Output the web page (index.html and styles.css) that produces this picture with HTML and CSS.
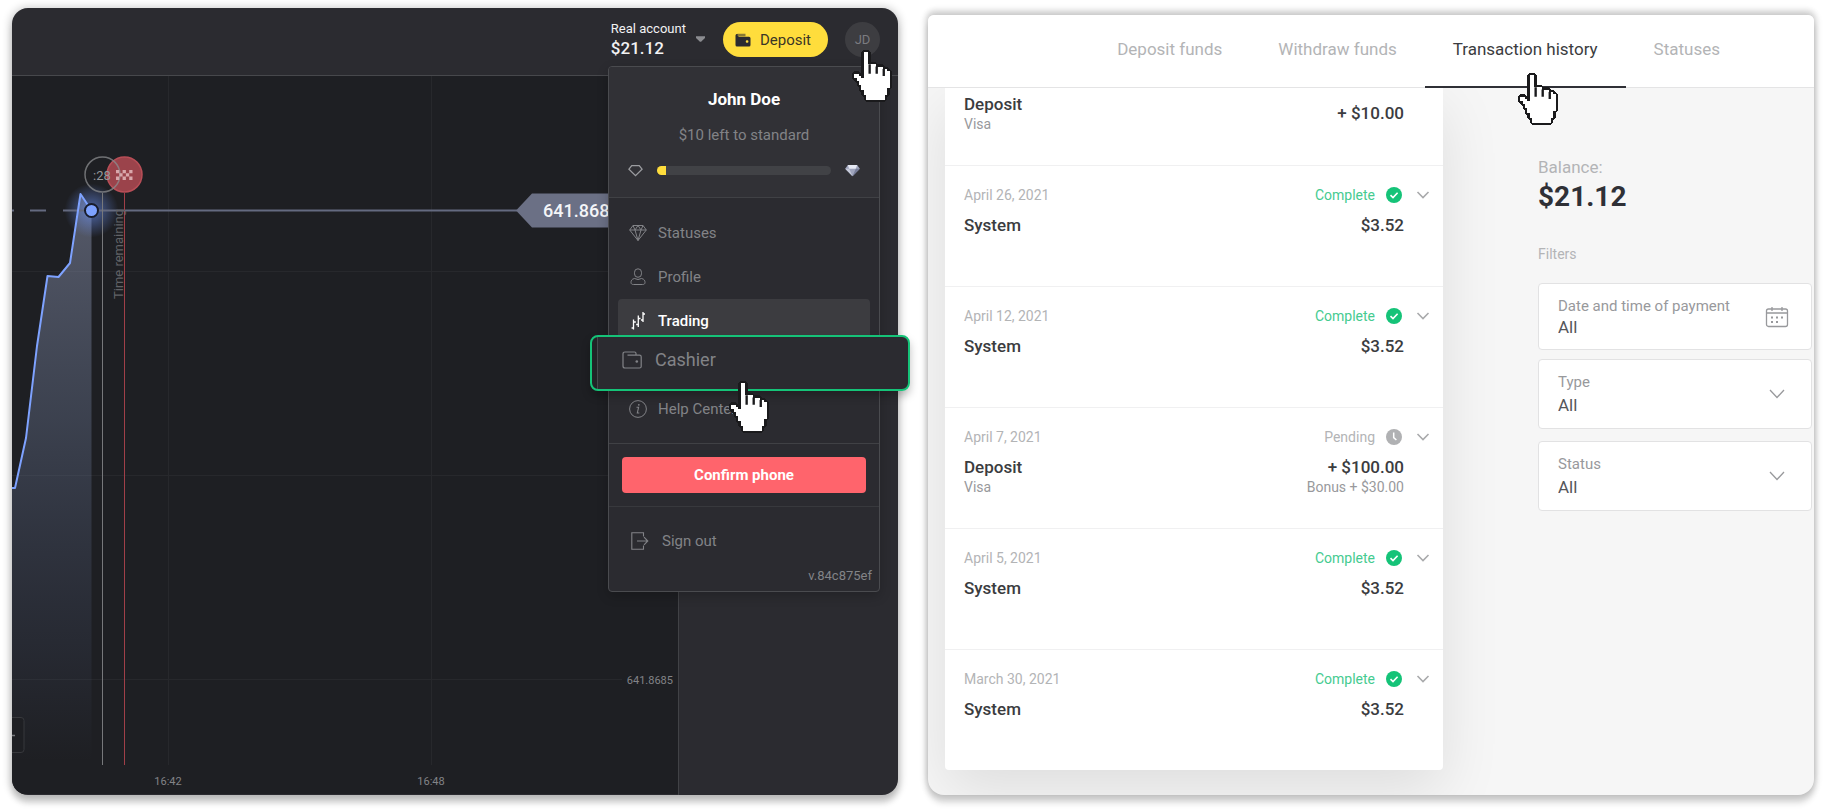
FILE: index.html
```
<!DOCTYPE html>
<html lang="en">
<head>
<meta charset="utf-8">
<title>Cashier</title>
<link rel="stylesheet" href="styles.css">
</head>
<body>
<svg class="sprite" aria-hidden="true">
  <symbol id="hand" viewBox="0 0 17 22">
    <path d="M5 1H7V6H10V7H13V8H15V9H16V16H15V19H14V21H6V19H5V17H4V15H3V13H2V12H1V10H3V11H4V12H5Z" fill="#fff" stroke="#1a1a1c" stroke-width="2" stroke-linejoin="bevel" paint-order="stroke" shape-rendering="crispEdges"/>
    <path d="M7 6h1v4H7zM10 7h1v3h-1zM13 8h1v3h-1z" fill="#1a1a1c"/>
  </symbol>
  <symbol id="check" viewBox="0 0 16 16">
    <circle cx="8" cy="8" r="8" fill="#15c378"/>
    <path d="M4.5 8.2 7 10.6 11.6 5.8" fill="none" stroke="#fff" stroke-width="1.6"/>
  </symbol>
  <symbol id="clock" viewBox="0 0 16 16">
    <circle cx="8" cy="8" r="8" fill="#b0b1b3"/>
    <path d="M7.7 3.5V8.6L10.4 11" fill="none" stroke="#fff" stroke-width="1.5"/>
  </symbol>
  <symbol id="chevron" viewBox="0 0 14 8">
    <path d="M1.500 1 7 6.500 12.500 1" fill="none" stroke="#a9aaac" stroke-width="1.600"/>
  </symbol>
</svg>

<section class="panel trading">
  <header class="topbar">
    <button class="account" type="button">
      <span class="account-text"><span class="account-name">Real account</span><span class="account-sum">$21.12</span></span>
      <svg class="caret" viewBox="0 0 8 5"><path d="M0 0H8V1.500L4.500 5H3.500L0 1.500Z" fill="#8b8c90"/></svg>
    </button>
    <button class="deposit" type="button">
      <svg class="wallet" viewBox="0 0 16 14">
        <path d="M1 2.500Q1 .8 2.600 .8H10.500V3.300H1Z" fill="#8a7a34"/>
        <path d="M.5 2.500Q.5 1 2 1H3Q1.800 1.500 2.600 2.700L4 3.800H14Q15.500 3.800 15.500 5.300V12Q15.500 13.500 14 13.500H2Q.5 13.500 .5 12Z" fill="#2b2b30"/>
        <rect x="10.800" y="7.200" width="2.600" height="2.600" rx="1" fill="#ffdd3c"/>
      </svg>
      Deposit
    </button>
    <div class="profile">
      <button class="avatar" type="button">JD</button>
      <svg class="hand hand-avatar"><use href="#hand"/></svg>
    </div>

    <div class="menu">
      <div class="menu-head">
        <h2 class="user">John Doe</h2>
        <p class="left">$10 left to standard</p>
        <div class="level">
          <svg class="gem" viewBox="0 0 16 13"><path d="M4 1.200H12L15 5 8 12 1 5Z" fill="none" stroke="#9b9ca0" stroke-width="1.400"/></svg>
          <div class="track"><div class="fill"></div></div>
          <svg class="gem" viewBox="0 0 16 13"><path d="M3 .5H13L15.800 4.500 8 12.500 .2 4.500Z" fill="#9fa5bd"/><path d="M3 .5H13L11.500 4.500H4.500Z" fill="#e6e9f4"/><path d="M.2 4.500H4.500L8 12.500Z" fill="#c6cada"/><path d="M11.500 4.500H15.800L8 12.500Z" fill="#767c98"/></svg>
        </div>
      </div>
      <nav class="menu-list">
        <a class="item" href="#">
          <svg class="icon" viewBox="0 0 18 18"><path d="M4 1.500H14L17.300 6 9 16.500 .7 6ZM.7 6H17.300M4 1.500 6 6 9 16.500 12 6 14 1.500M6 6 9 1.500 12 6" fill="none" stroke="currentColor" stroke-width="1"/></svg>Statuses</a>
        <a class="item" href="#">
          <svg class="icon" viewBox="0 0 18 18"><rect x="5.500" y=".8" width="7" height="8.500" rx="3.500" fill="none" stroke="currentColor"/><path d="M5.500 10.500C2.500 11 2 13 2 14.500 2 16 3 16.500 4.500 16.500H13.500C15 16.500 16 16 16 14.500 16 13 15.500 11 12.500 10.500Q9 12.500 5.500 10.500Z" fill="none" stroke="currentColor"/></svg>Profile</a>
        <a class="item active" href="#">
          <svg class="icon" viewBox="0 0 18 18"><path d="M4.500 7.500V17.500M9.300 3.500V15M14 0V10M4.500 10H6.800M2.600 16H4.500M9.300 6.500H11.500M7.200 12.500H9.300M14 2H16M12 8H14" fill="none" stroke="currentColor" stroke-width="1.300"/></svg>Trading</a>
        <div class="item-slot">
          <a class="callout" href="#">
            <svg class="icon-lg" viewBox="0 0 20 18"><path d="M14 4V2.500Q14 1 12.500 1H3Q1 1 1 3V15Q1 17 3 17H17.500Q19.200 17 19.200 15.500V5.800Q19.200 4.200 17.500 4.200H5.500" fill="none" stroke="currentColor" stroke-width="1.200"/><circle cx="14.800" cy="10.500" r="1.300" fill="currentColor"/></svg>Cashier
          </a>
          <svg class="hand hand-cashier"><use href="#hand"/></svg>
        </div>
        <a class="item" href="#">
          <svg class="icon" viewBox="0 0 18 18"><circle cx="9" cy="9" r="8.400" fill="none" stroke="currentColor"/><path d="M7.500 7.300H9.600L8.300 13H10.300" fill="none" stroke="currentColor" stroke-width="1.100"/><circle cx="9.800" cy="4.800" r=".9" fill="currentColor"/></svg>Help Center</a>
      </nav>
      <div class="menu-confirm"><button class="confirm" type="button">Confirm phone</button></div>
      <div class="menu-foot">
        <a class="signout" href="#">
          <svg class="icon" viewBox="0 0 18 18"><path d="M12.500 4.500V.8H.8V17.200H12.500V13.500M6 9H16.800M13 5.200 16.800 9 13 12.800" fill="none" stroke="currentColor" stroke-width="1.100"/></svg>Sign out</a>
        <p class="version">v.84c875ef</p>
      </div>
    </div>
  </header>

  <div class="workspace">
    <svg class="chart" viewBox="0 0 666 718" preserveAspectRatio="xMinYMin slice" role="img" aria-label="Price chart">
      <defs>
        <linearGradient id="area" x1="0" y1="118" x2="0" y2="685" gradientUnits="userSpaceOnUse">
          <stop offset="0" stop-color="#8f96b0" stop-opacity=".5"/>
          <stop offset=".4" stop-color="#7583a3" stop-opacity=".34"/>
          <stop offset=".8" stop-color="#5c6a90" stop-opacity=".14"/>
          <stop offset="1" stop-color="#5c6a90" stop-opacity="0"/>
        </linearGradient>
        <radialGradient id="glow"><stop offset="0" stop-color="#6f97ff" stop-opacity=".6"/><stop offset="1" stop-color="#6f97ff" stop-opacity="0"/></radialGradient>
      </defs>
      <path d="M0 195.500H666M0 399.500H666M0 603.500H610M156.500 0V689M419.500 0V689" stroke="#27282c" fill="none"/>
      <path d="M0 412H3L14 362 25 270 35.500 200 46.500 201 58 187 68.500 118 79.500 134.500V689H0Z" fill="url(#area)"/>
      <circle cx="79.500" cy="134.500" r="27" fill="url(#glow)"/>
      <path d="M0 134.500H2M18 134.500H34M51 134.500H505" stroke="#646a80" stroke-width="2"/>
      <path d="M0 412H3L14 362 25 270 35.500 200 46.500 201 58 187 68.500 118 79.500 134.500" fill="none" stroke="#7ea2ff" stroke-width="2" stroke-linejoin="round"/>
      <path d="M90.500 117V689" stroke="#77787b"/>
      <path d="M112.500 117V689" stroke="#a03f48"/>
      <text class="axis-note" transform="translate(111 223) rotate(-90)">Time remaining</text>
      <circle cx="79.500" cy="134.500" r="6.500" fill="#7ea2ff" stroke="#191d2c" stroke-width="2"/>
      <circle cx="112.500" cy="98.500" r="17.500" fill="#9b434b" stroke="#b84e57" stroke-width="1.500"/>
      <circle cx="90.500" cy="98.500" r="17.500" fill="none" stroke="#8b8c8f" stroke-opacity=".75" stroke-width="1.500"/>
      <text class="timer" x="81" y="104">:28</text>
      <path d="M104 94h3.300v3.300H104zM110.600 94h3.300v3.300h-3.300zM117.200 94h3.300v3.300h-3.300zM107.300 97.300h3.300v3.300h-3.300zM113.900 97.300h3.300v3.300h-3.300zM104 100.600h3.300v3.300H104zM110.600 100.600h3.300v3.300h-3.300zM117.200 100.600h3.300v3.300h-3.300z" fill="#d9a7ab"/>
      <path d="M504 134.500 520 117.500H600V151.500H520Z" fill="#6b7085"/>
      <text class="price" x="531" y="141">641.868</text>
      <text class="axis" x="661" y="608" text-anchor="end">641.8685</text>
      <text class="axis" x="156" y="709" text-anchor="middle">16:42</text>
      <text class="axis" x="419" y="709" text-anchor="middle">16:48</text>
      <rect x="-20" y="641.500" width="32" height="35" rx="3" fill="#1e1f23" stroke="#37383c"/>
      <path d="M0 659.500H3" stroke="#77787c" stroke-width="1.500"/>
    </svg>
    <aside class="rail"></aside>
  </div>
</section>

<section class="panel cashier">
  <nav class="tabs">
    <a class="tab" href="#">Deposit funds</a>
    <a class="tab" href="#">Withdraw funds</a>
    <a class="tab current" href="#">Transaction history<svg class="hand hand-tab"><use href="#hand"/></svg></a>
    <a class="tab" href="#">Statuses</a>
  </nav>
  <div class="content">
    <ul class="history">
      <li class="row row-cut">
        <div class="what"><span class="title">Deposit</span><span class="sub">Visa</span></div>
        <div class="sum"><span class="title">+ $10.00</span></div>
      </li>
      <li class="row">
        <div class="what"><span class="date">April 26, 2021</span><span class="title">System</span></div>
        <div class="sum"><span class="state done">Complete<svg class="mark"><use href="#check"/></svg></span><span class="title">$3.52</span></div>
        <button class="more" type="button" aria-label="Details"><svg class="chev"><use href="#chevron"/></svg></button>
      </li>
      <li class="row">
        <div class="what"><span class="date">April 12, 2021</span><span class="title">System</span></div>
        <div class="sum"><span class="state done">Complete<svg class="mark"><use href="#check"/></svg></span><span class="title">$3.52</span></div>
        <button class="more" type="button" aria-label="Details"><svg class="chev"><use href="#chevron"/></svg></button>
      </li>
      <li class="row">
        <div class="what"><span class="date">April 7, 2021</span><span class="title">Deposit</span><span class="sub">Visa</span></div>
        <div class="sum"><span class="state">Pending<svg class="mark"><use href="#clock"/></svg></span><span class="title">+ $100.00</span><span class="sub">Bonus + $30.00</span></div>
        <button class="more" type="button" aria-label="Details"><svg class="chev"><use href="#chevron"/></svg></button>
      </li>
      <li class="row">
        <div class="what"><span class="date">April 5, 2021</span><span class="title">System</span></div>
        <div class="sum"><span class="state done">Complete<svg class="mark"><use href="#check"/></svg></span><span class="title">$3.52</span></div>
        <button class="more" type="button" aria-label="Details"><svg class="chev"><use href="#chevron"/></svg></button>
      </li>
      <li class="row">
        <div class="what"><span class="date">March 30, 2021</span><span class="title">System</span></div>
        <div class="sum"><span class="state done">Complete<svg class="mark"><use href="#check"/></svg></span><span class="title">$3.52</span></div>
        <button class="more" type="button" aria-label="Details"><svg class="chev"><use href="#chevron"/></svg></button>
      </li>
    </ul>
    <aside class="side">
      <p class="balance-label">Balance:</p>
      <p class="balance">$21.12</p>
      <h3 class="filters-title">Filters</h3>
      <div class="field field-date">
        <div class="field-main"><label for="when">Date and time of payment</label><input id="when" class="control" type="text" value="All"></div>
        <svg class="calendar" viewBox="0 0 24 22"><rect x="1.500" y="3" width="21" height="17.500" rx="2" fill="none" stroke="#98999c" stroke-width="1.300"/><path d="M1.500 7H22.500M7 1V5M17 1V5" stroke="#98999c" stroke-width="1.300"/><path d="M6 11.500h2M11 11.500h2M16 11.500h2M6 16h2M11 16h2" stroke="#98999c" stroke-width="2"/></svg>
      </div>
      <div class="field">
        <div class="field-main"><label for="type">Type</label><select id="type" class="control"><option>All</option></select></div>
        <svg class="arrow" viewBox="0 0 16 10"><path d="M1 1 8 8.500 15 1" fill="none" stroke="#98999c" stroke-width="1.300"/></svg>
      </div>
      <div class="field">
        <div class="field-main"><label for="status">Status</label><select id="status" class="control"><option>All</option></select></div>
        <svg class="arrow" viewBox="0 0 16 10"><path d="M1 1 8 8.500 15 1" fill="none" stroke="#98999c" stroke-width="1.300"/></svg>
      </div>
    </aside>
  </div>
</section>
</body>
</html>
```
FILE: styles.css
```
* { box-sizing: border-box; }

body {
  margin: 0;
  min-height: 100vh;
  padding: 8px 13px 17px 12px;
  display: flex;
  gap: 30px;
  background: #fff;
  font-family: Roboto, "Liberation Sans", sans-serif;
  font-size: 17px;
  line-height: 20px;
  color: #3b3c40;
}

h2, h3, p, ul { margin: 0; padding: 0; }
ul { list-style: none; }
a { color: inherit; text-decoration: none; }
button, input, select { font: inherit; color: inherit; border: 0; padding: 0; background: none; }
svg { display: block; flex: none; }
.sprite { position: absolute; width: 0; height: 0; }

.hand { position: absolute; width: 40px; height: 52px; z-index: 5; }

.panel { flex: 1 1 0; min-width: 0; display: flex; flex-direction: column; }

/* Trading room */
.trading {
  border-radius: 16px;
  background: #2b2b30;
  box-shadow: 0 8px 6px rgba(0, 0, 0, .15), 0 1px 8px 2px rgba(0, 0, 0, .2);
  font-size: 15px;
}

.topbar {
  position: relative;
  display: flex;
  justify-content: flex-end;
  align-items: flex-start;
  height: 68px;
  padding: 14px 18px 0 0;
  border-bottom: 1px solid #47484c;
}
.account { display: flex; align-items: center; gap: 10px; margin: -2px 18px 0 0; color: #f2f2f3; text-align: left; }
.account-text { display: flex; flex-direction: column; }
.account-name { font-size: 13px; line-height: 18px; }
.account-sum { font-size: 17px; font-weight: 500; line-height: 20px; }
.caret { width: 9px; height: 6px; }
.deposit {
  display: flex; align-items: center; gap: 9px;
  height: 35px; margin-right: 17px; padding: 0 17px 0 12px;
  border-radius: 18px; background: #ffdd3c; color: #3a3526;
}
.wallet { width: 16px; height: 14px; }
.profile { position: relative; }
.avatar { display: block; width: 35px; height: 35px; border-radius: 50%; background: #3d3d41; color: #7b7b80; font-size: 13px; }
.hand-avatar { left: 7px; top: 28px; }

.menu {
  position: absolute; z-index: 2; top: 58px; right: 18px; width: 272px;
  border: 1px solid #4a4b4f; border-radius: 4px;
  background: #2b2b30; color: #828387;
  box-shadow: 0 4px 12px rgba(0, 0, 0, .2);
}
.menu-head { padding: 22px 19px 20px; border-bottom: 1px solid #404145; background: #313136; text-align: center; border-radius: 3px 3px 0 0; }
.user { color: #fff; font-size: 17px; line-height: 20px; font-weight: 700; }
.left { margin-top: 15px; line-height: 22px; }
.level { display: flex; align-items: center; gap: 14px; margin-top: 17px; height: 14px; }
.gem { width: 15px; height: 13px; }
.track { flex: 1; height: 9px; border-radius: 5px; background: #414246; overflow: hidden; }
.fill { width: 5%; height: 9px; background: #ffdd3c; }

.menu-list { padding: 13px 9px 12px; border-bottom: 1px solid #404145; }
.item { display: flex; align-items: center; gap: 11px; height: 44px; padding-left: 11px; border-radius: 4px; }
.icon { width: 18px; height: 18px; }
.active { background: #3c3c40; color: #fff; font-weight: 500; }
.item-slot { position: relative; height: 44px; }
.callout {
  position: absolute; z-index: 3; left: -28px; right: -40px; top: -8px; height: 56px;
  display: flex; align-items: center; gap: 13px; padding: 0 0 6px 30px;
  border: 2px solid #15c378; border-radius: 8px;
  background: linear-gradient(90deg, #222327 5px, #46474b 5px, #46474b 6px, #2b2b30 6px);
  box-shadow: 0 5px 8px rgba(0, 0, 0, .25);
  font-size: 18px;
}
.icon-lg { width: 20px; height: 18px; }
.hand-cashier { left: 111px; top: 38px; }
.menu-confirm { padding: 13px; border-bottom: 1px solid #38393d; }
.confirm { display: block; width: 100%; height: 36px; border-radius: 4px; background: #ff646c; color: #fff; font-weight: 700; }
.menu-foot { padding: 24px 7px 5px 22px; }
.signout { display: flex; align-items: center; gap: 13px; }
.version { margin-top: 15px; text-align: right; font-size: 13px; }

.workspace { flex: 1; display: flex; min-height: 0; border-radius: 0 0 16px 16px; overflow: hidden; }
.chart { flex: 1 1 0; min-width: 0; height: 718px; background: #1e1f23; font-family: Roboto, "Liberation Sans", sans-serif; }
.rail { width: 220px; border-left: 1px solid #414246; }
.axis { font-size: 11px; fill: #828387; }
.axis-note { font-size: 13px; fill: #626367; }
.timer { font-size: 13px; fill: #97989b; }
.price { font-size: 18px; font-weight: 500; fill: #f4f5f8; }

/* Cashier */
.cashier {
  margin-top: 7px;
  border-radius: 6px 6px 16px 16px;
  background: #f6f6f6;
  box-shadow: 0 8px 6px rgba(0, 0, 0, .14), 0 -5px 6px rgba(0, 0, 0, .1), 0 0 7px 2px rgba(0, 0, 0, .16);
}
.tabs {
  display: flex; justify-content: flex-end; height: 73px; padding-right: 66px;
  border-bottom: 1px solid #e4e4e5; border-radius: 6px 6px 0 0; background: #fff;
}
.tab { position: relative; padding: 24px 28px 0; height: 73px; color: #b3b4b6; white-space: nowrap; }
.current { border-bottom: 2px solid #2f3036; color: #3b3c40; }
.hand-tab { left: 93px; top: 58px; }

.content {
  flex: 1;
  display: grid; grid-template-columns: 498fr 274fr; column-gap: 95px; align-items: start;
  padding: 0 2px 25px 17px; border-radius: 0 0 16px 16px; overflow: hidden;
}
.history { background: #fff; border-radius: 0 0 4px 4px; box-shadow: 0 20px 60px rgba(0, 0, 0, .1); }
.row { display: flex; height: 121px; padding: 19px 12px 0 19px; border-top: 1px solid #f0f0f1; }
.row-cut { height: 77px; padding: 6px 39px 0 19px; border-top: 0; }
.what { flex: 1; display: flex; flex-direction: column; }
.sum { display: flex; flex-direction: column; align-items: flex-end; }
.row-cut .sum { padding-top: 9px; }
.date, .state, .sub { font-size: 14px; line-height: 20px; color: #b3b4b6; }
.sub { color: #98999c; }
.title { font-weight: 500; line-height: 20px; }
.date + .title, .state + .title { margin-top: 10px; }
.state { display: flex; align-items: center; gap: 11px; padding-right: 2px; }
.done { color: #45cb90; }
.mark { width: 16px; height: 16px; }
.more { width: 14px; height: 20px; margin-left: 12px; }
.row .more { margin-right: 1px; }
.chev { width: 14px; height: 8px; }

.side { padding-top: 69px; }
.balance-label { line-height: 20px; color: #b3b4b6; }
.balance { color: #2f3036; font-size: 28px; line-height: 40px; font-weight: 700; }
.filters-title { margin: 27px 0 19px; font-size: 14px; line-height: 20px; font-weight: 400; color: #b3b4b6; }
.field {
  display: flex; align-items: center; justify-content: space-between;
  height: 70px; margin-bottom: 12px; padding: 0 26px 0 19px;
  border: 1px solid #e2e2e3; border-radius: 4px; background: #fff;
}
.field-date { height: 67px; margin-bottom: 9px; padding-right: 22px; }
.field-main { flex: 1; min-width: 0; display: flex; flex-direction: column; gap: 2px; }
.field-date .field-main { gap: 0; }
.field-main label { font-size: 15px; line-height: 20px; color: #98999c; }
.control { width: 100%; height: 22px; appearance: none; outline: 0; color: #55565a; }
.calendar { width: 24px; height: 22px; }
.arrow { width: 16px; height: 10px; }
```
